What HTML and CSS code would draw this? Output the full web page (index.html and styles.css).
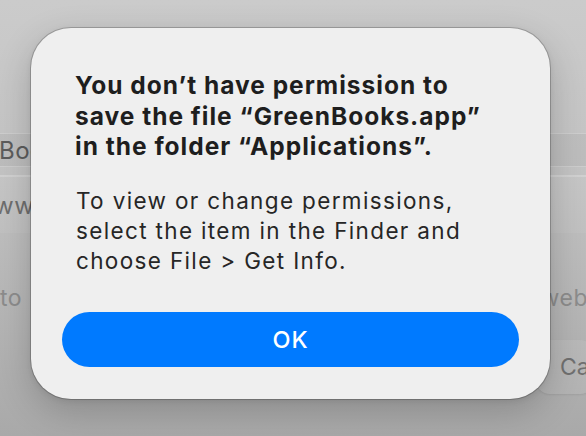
FILE: index.html
```html
<!DOCTYPE html>
<html lang="en">
<head>
<meta charset="utf-8">
<title>Permission alert</title>
<link rel="stylesheet" href="styles.css">
</head>
<body>
  <div class="backdrop">
    <div class="bg-field bg-name"><span class="bg-text">Boo</span></div>
    <div class="bg-field bg-url"><span class="bg-text url">www</span></div>
    <div class="bg-line"><span class="bg-muted">to</span><span class="bg-muted web">web</span></div>
    <div class="bg-actions"><span class="bg-button">Ca</span></div>
  </div>

  <div class="alert" role="alertdialog">
    <h1 class="alert-title">You don’t have permission to<br>save the file “GreenBooks.app”<br>in the folder “Applications”.</h1>
    <p class="alert-body">To view or change permissions,<br>select the item in the Finder and<br>choose File &gt; Get Info.</p>
    <button class="alert-button">OK</button>
  </div>
</body>
</html>
```

FILE: styles.css
```css
* { box-sizing: border-box; }

html, body {
  margin: 0;
  padding: 0;
  width: 586px;
  height: 436px;
  overflow: hidden;
}

body {
  font-family: Inter, "Noto Sans", "Liberation Sans", sans-serif;
  position: relative;
}

.backdrop {
  height: 436px;
  display: flex;
  flex-direction: column;
  background: linear-gradient(180deg, #cbcbcb 0%, #c3c3c3 40%, #b4b4b4 75%, #a9a9a9 100%);
  overflow: hidden;
}

.bg-field {
  display: flex;
  align-items: center;
}

.bg-name {
  margin-top: 133px;
  height: 34px;
  background: rgba(0, 0, 0, 0.035);
  border-top: 1px solid rgba(255, 255, 255, 0.25);
  border-bottom: 1px solid rgba(255, 255, 255, 0.25);
}

.bg-url {
  margin-top: 8px;
  height: 58px;
  border-top: 2px solid rgba(255, 255, 255, 0.2);
  background: rgba(255, 255, 255, 0.06);
}

.bg-text {
  font-size: 24px;
  letter-spacing: 0.5px;
  color: #5c5c5c;
  margin-left: -1px;
}

.bg-text.url {
  margin-left: -6px;
  color: #6e6e6e;
}

.bg-line {
  margin-top: 51px;
  display: flex;
  justify-content: space-between;
  align-items: baseline;
  height: 30px;
}

.bg-muted {
  font-size: 23px;
  letter-spacing: 0.5px;
  color: #8c8c8c;
}

.bg-muted.web {
  margin-right: -2px;
}

.bg-actions {
  margin-top: 26px;
  display: flex;
  justify-content: flex-end;
}

.bg-button {
  width: 58px;
  height: 54px;
  margin-right: -8px;
  border-radius: 14px;
  background: rgba(255, 255, 255, 0.08);
  box-shadow: 0 1px 2px rgba(0, 0, 0, 0.08);
  display: flex;
  align-items: center;
  padding-left: 24px;
  font-size: 23px;
  color: #707070;
}

.alert {
  position: absolute;
  left: 31px;
  top: 28px;
  width: 519px;
  height: 371px;
  background: #efefef;
  border-radius: 40px;
  box-shadow: 0 0 0 1px rgba(0, 0, 0, 0.2), 0 12px 36px rgba(0, 0, 0, 0.2), 0 2px 6px rgba(0, 0, 0, 0.08);
  padding: 42px 31px 32px;
  display: flex;
  flex-direction: column;
}

.alert-title {
  margin: 0 14px 0 13px;
  font-size: 24.5px;
  line-height: 30.5px;
  letter-spacing: 1px;
  font-weight: 700;
  color: #1e1e1e;
  white-space: nowrap;
}

.alert-body {
  margin: 24.5px 14px 0;
  font-size: 22.5px;
  line-height: 30px;
  letter-spacing: 1.35px;
  font-weight: 400;
  color: #262626;
  white-space: nowrap;
}

.alert-button {
  margin-top: auto;
  height: 55px;
  width: 100%;
  border: 0;
  border-radius: 28px;
  background: #007aff;
  color: #ffffff;
  font-family: Inter, "Noto Sans", "Liberation Sans", sans-serif;
  font-size: 23.5px;
  letter-spacing: 1px;
  font-weight: 500;
  padding: 0;
}
```
